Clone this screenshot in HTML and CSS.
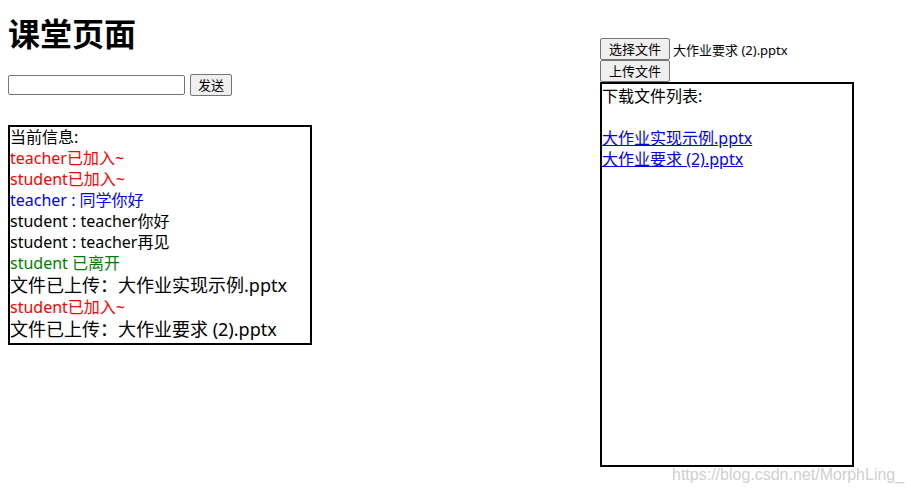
FILE: index.html
```html
<!DOCTYPE html>
<html lang="zh">

<head>
  <meta charset="UTF-8">
  <meta name="viewport" content="width=device-width, initial-scale=1.0">
  <title>课堂页面</title>
  <link rel="stylesheet" href="styles.css">
</head>

<body>

  <div class="page">
    <!-- Chat side -->
    <div class="chat">
      <h1>课堂页面</h1>
      <div class="send-row">
        <input type="text" id="msgInput">
        <button id="sendBtn">发送</button>
      </div>
      <div class="msg-box" id="msgBox">
        <div class="msg">当前信息:</div>
        <div class="msg join">teacher已加入~</div>
        <div class="msg join">student已加入~</div>
        <div class="msg self">teacher : 同学你好</div>
        <div class="msg">student : teacher你好</div>
        <div class="msg">student : teacher再见</div>
        <div class="msg leave">student 已离开</div>
        <div class="msg file">文件已上传：大作业实现示例.pptx</div>
        <div class="msg join">student已加入~</div>
        <div class="msg file">文件已上传：大作业要求 (2).pptx</div>
      </div>
    </div>

    <!-- Files side -->
    <div class="files">
      <div class="pick-row">
        <button>选择文件</button>
        <span class="file-name">大作业要求 (2).pptx</span>
      </div>
      <button class="upload-btn">上传文件</button>
      <div class="file-list">
        下载文件列表:<br><br>
        <a href="#">大作业实现示例.pptx</a><br>
        <a href="#">大作业要求 (2).pptx</a>
      </div>
    </div>
  </div>

  <div class="watermark">https://blog.csdn.net/MorphLing_</div>

</body>

</html>
```

FILE: styles.css
```css
body {
  margin: 8px;
  font-family: "Noto Sans", "Noto Sans CJK SC", sans-serif;
  font-size: 16px;
  color: #000;
  background-color: #fff;
}

.page {
  display: grid;
  grid-template-columns: 592px auto;
}

h1 {
  font-size: 32px;
  font-weight: bold;
  line-height: 44px;
  margin: 2px 0 20px 0;
  font-family: "Noto Sans CJK SC", sans-serif;
}

.send-row {
  display: flex;
  align-items: center;
  gap: 5px;
}

.send-row input {
  width: 171px;
  height: 16px;
  padding: 1px 2px;
  margin: 0;
  border: 1px solid #767676;
  border-radius: 2px;
}

button {
  font-family: "Noto Sans CJK SC", sans-serif;
  font-size: 13px;
  height: 22px;
  padding: 0 7px;
  margin: 0;
  border: 1px solid #767676;
  border-radius: 2px;
  background-color: #efefef;
  color: #000;
  line-height: 18px;
}

.pick-row button,
.upload-btn {
  padding: 0 8px;
}

.msg-box {
  width: 300px;
  margin-top: 29px;
  border: 2px solid #000;
  padding-bottom: 2px;
}

.msg {
  line-height: 21px;
  white-space: nowrap;
}

.msg.join {
  color: #ff0000;
}

.msg.self {
  color: #0000ff;
}

.msg.leave {
  color: #008000;
}

.msg.file {
  font-size: 18px;
  line-height: 23px;
}

.files {
  padding-top: 30px;
}

.pick-row {
  display: flex;
  align-items: center;
  gap: 3px;
  height: 22px;
}

.file-name {
  font-size: 13px;
}

.upload-btn {
  display: block;
}

.file-list {
  width: 250px;
  height: 379px;
  padding-top: 2px;
  border: 2px solid #000;
  line-height: 21px;
}

.file-list a {
  color: #0000ee;
}

.watermark {
  position: absolute;
  left: 672px;
  top: 466px;
  font-family: "Liberation Sans", Arial, sans-serif;
  font-size: 16px;
  color: #d0d0d0;
}
```
